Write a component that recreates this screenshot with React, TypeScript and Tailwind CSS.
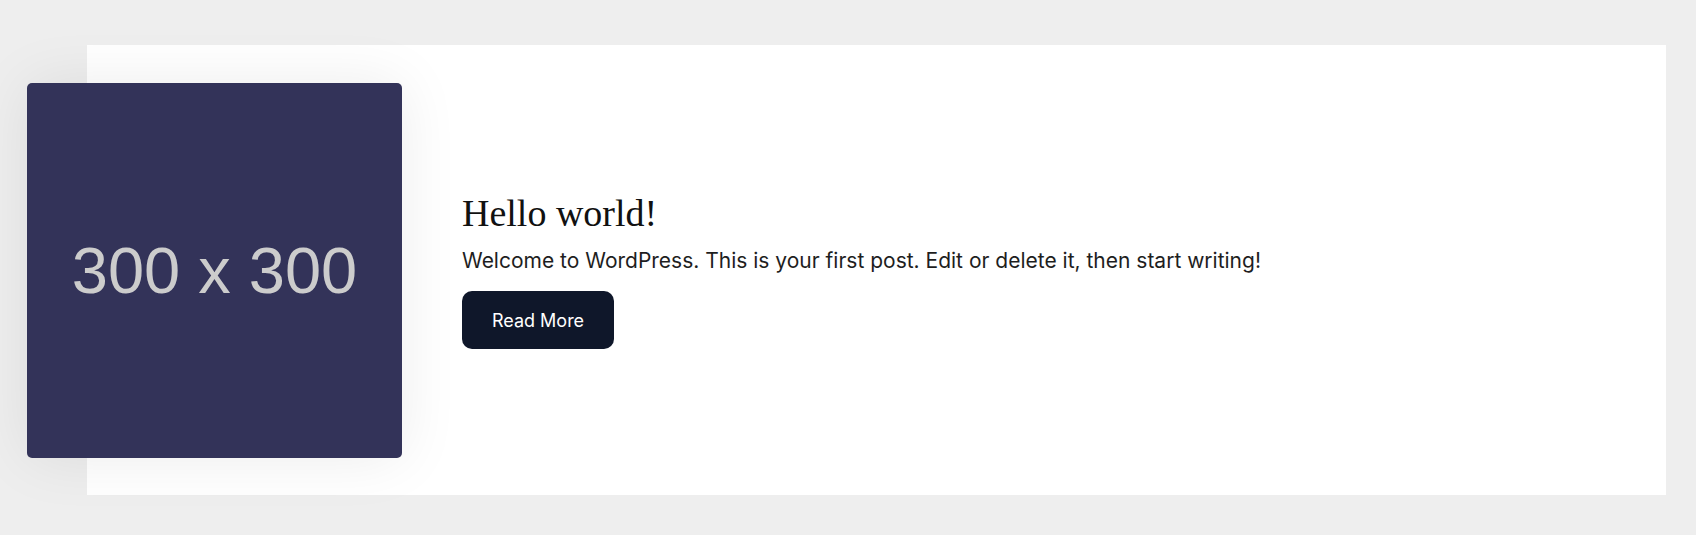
export default function App() {
  return (
    <div className="min-h-[535px] w-full bg-[#eeeeee] pt-[45px] pl-[87px] pr-[30px]">
      <div className="flex h-[450px] items-center bg-white">
        <div className="-ml-[60px] flex h-[375px] w-[375px] shrink-0 items-center justify-center rounded-[5px] bg-[#333359] shadow-[0_0_60px_rgba(0,0,0,0.08)]">
          <span className="text-[65px] leading-none text-[#cccccc]" style={{ fontFamily: '"Liberation Sans", Arial, sans-serif' }}>
            300 x 300
          </span>
        </div>
        <div className="ml-[60px] flex flex-col items-start">
          <h2 className="text-[38px] leading-[1.2] text-[#111111]" style={{ fontFamily: '"Liberation Serif", "Times New Roman", serif' }}>
            Hello world!
          </h2>
          <p className="mt-[10px] text-[21px] leading-[30px] text-[#1e1e1e]" style={{ fontFamily: 'Inter, "Noto Sans", sans-serif' }}>
            Welcome to WordPress. This is your first post. Edit or delete it, then start writing!
          </p>
          <button className="mt-[15px] h-[58px] w-[152px] rounded-[10px] bg-[#0f172a] text-[18px] text-white" style={{ fontFamily: 'Inter, "Noto Sans", sans-serif' }}>
            Read More
          </button>
        </div>
      </div>
    </div>
  );
}
